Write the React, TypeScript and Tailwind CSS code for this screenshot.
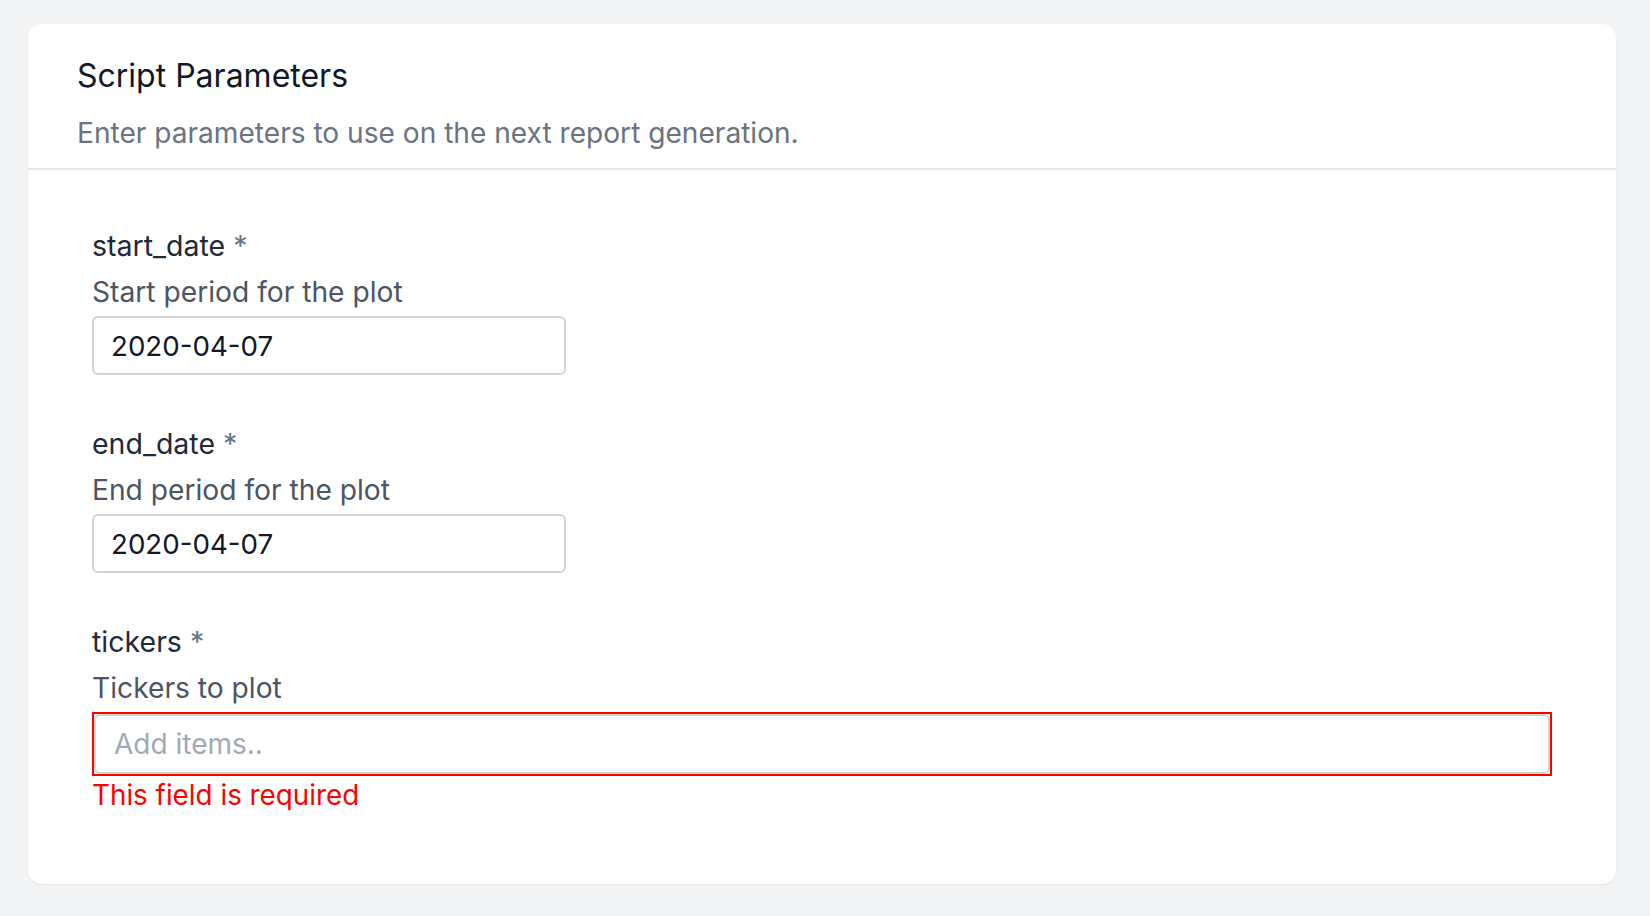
import React from 'react';

interface Field {
  name: string;
  description: string;
  value?: string;
  placeholder?: string;
  error?: string;
  wide?: boolean;
}

const fields: Field[] = [
  { name: 'start_date', description: 'Start period for the plot', value: '2020-04-07' },
  { name: 'end_date', description: 'End period for the plot', value: '2020-04-07' },
  {
    name: 'tickers',
    description: 'Tickers to plot',
    placeholder: 'Add items..',
    error: 'This field is required',
    wide: true,
  },
];

const ParamField: React.FC<{ field: Field }> = ({ field }) => {
  return (
    <div className="flex flex-col">
      <label className="text-[28.5px] leading-[46px] text-[#1f2937]">
        {field.name} <span className="text-[#64748b]">*</span>
      </label>
      <p className="text-[28.2px] leading-[46px] text-[#4b5563]">{field.description}</p>
      {field.wide ? (
        <div className="mt-[1px] border-2 border-[#ff0000]">
          <input
            readOnly
            placeholder={field.placeholder}
            className="block h-[60px] w-full rounded-[6px] border-2 border-[#d4d4d4] bg-white px-[18px] text-[28px] text-[#111827] outline-none placeholder:text-[#a0aab4]"
          />
        </div>
      ) : (
        <input
          readOnly
          value={field.value}
          className="mt-[1px] block h-[59px] w-[474px] rounded-[6px] border-2 border-[#d4d4d4] bg-white px-[17px] text-[27.7px] text-[#111827] outline-none"
        />
      )}
      {field.error && (
        <p className="mt-[1px] text-[27.8px] leading-[36px] text-[#ff0000]">{field.error}</p>
      )}
    </div>
  );
};

export default function App() {
  return (
    <div
      className="min-h-screen bg-[#f3f4f6] pl-[28px] pr-[34px] pt-[24px]"
      style={{ fontFamily: 'Inter, "Noto Sans", sans-serif' }}
    >
      <div className="rounded-[14px] bg-white shadow-[0_1px_2px_rgba(0,0,0,0.08)]">
        <div className="border-b-2 border-[#e5e7eb] px-[49px] pb-[17px] pt-[32px]">
          <h2 className="text-[32px] leading-[40px] text-[#111827]">Script Parameters</h2>
          <p className="mt-[19px] text-[28.1px] leading-[36px] text-[#6b7280]">
            Enter parameters to use on the next report generation.
          </p>
        </div>
        <div className="flex flex-col gap-[46px] px-[64px] pb-[71px] pt-[53px]">
          {fields.map((f) => (
            <ParamField key={f.name} field={f} />
          ))}
        </div>
      </div>
    </div>
  );
}
